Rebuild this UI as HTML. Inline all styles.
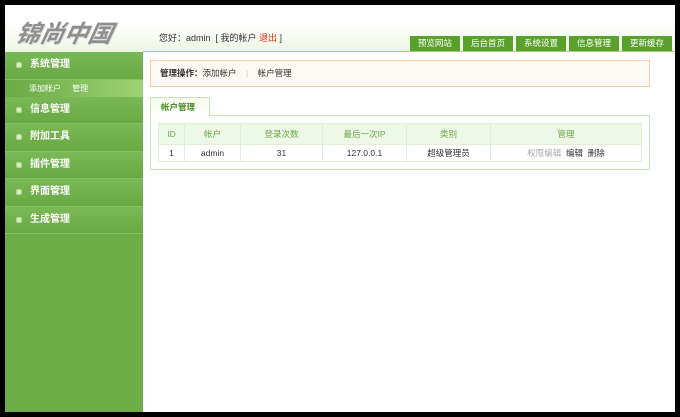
<!DOCTYPE html><html><head><meta charset="utf-8"><style>
*{margin:0;padding:0;box-sizing:border-box}
body{width:680px;height:417px;background:#000;font-family:"Liberation Sans","Noto Sans CJK SC",sans-serif;font-size:9px;color:#333;position:relative;overflow:hidden}
#wrap{position:absolute;left:5px;top:5px;width:670px;height:407px;background:#fff}
#hd{position:absolute;left:0;top:0;width:670px;height:47px;background:linear-gradient(#fff 40%,#eef5e4)}
#logo{position:absolute;left:12px;top:9px;font-size:24px;font-weight:bold;font-style:italic;color:#8f8f8f;font-family:"Noto Sans CJK SC",sans-serif;letter-spacing:0px;text-shadow:1px 1px 0 #ddd;transform:skewX(-12deg)}
#hi{position:absolute;left:154px;top:26px;font-size:9px;color:#333}
#hi span{color:#e03010}
#nav{position:absolute;right:3px;top:31px;display:flex;gap:3px}
#nav div{background:#5aa12c;color:#fff;font-size:8.5px;height:15px;line-height:15px;padding:0 8px}
#hline{position:absolute;left:138px;top:46px;width:532px;height:1px;background:#9fcf7f}
#sb{position:absolute;left:0;top:47px;width:138px;height:360px;background:#6cad47}
.mi{height:27.5px;line-height:26px;color:#fff;font-weight:bold;font-size:10px;padding-left:25px;position:relative;background:linear-gradient(#79b956,#68a944);border-bottom:1px solid #86c064}
.mi:before{content:"";position:absolute;left:11px;top:10px;width:6px;height:6px;background:radial-gradient(circle,#d9f0c8 40%,#9dd27c 70%);border-radius:1px}
.sub{height:17px;line-height:17px;color:#fff;font-size:8px;padding-left:24px;background:linear-gradient(90deg,#6cad47 10%,#9ed474)}
#bc{position:absolute;left:145px;top:55px;width:500px;height:27px;border:1px solid #f8d0a8;background:#fcf9f4;line-height:25px;padding-left:9px;font-size:8.5px}
#tab{position:absolute;left:145px;top:92px;width:60px;height:19px;border:1px solid #c8e6b4;border-bottom:none;background:linear-gradient(#f4fbee,#fff);color:#4a8a20;font-weight:bold;font-size:8.5px;line-height:18px;padding-left:10px;z-index:2}
#box{position:absolute;left:145px;top:110px;width:500px;height:55px;border:1px solid #c8e6b4}
table{position:absolute;left:7px;top:7px;width:484px;border-collapse:collapse;font-size:8.5px;text-align:center}
td{border:1px solid #e0eed5;height:17px}
tr.h td{background:#eef8e6;color:#6aa84a;height:21px}
</style></head><body><div id="wrap">
<div id="hd"><div id="logo">锦尚中国</div>
<div id="hi">您好：admin &nbsp;[ 我的帐户 <span>退出</span> ]</div>
<div id="nav"><div>预览网站</div><div>后台首页</div><div>系统设置</div><div>信息管理</div><div>更新缓存</div></div></div>
<div id="hline"></div>
<div id="sb">
<div class="mi">系统管理</div>
<div class="sub">添加帐户 &nbsp;&nbsp;&nbsp;&nbsp;管理</div>
<div class="mi">信息管理</div>
<div class="mi">附加工具</div>
<div class="mi">插件管理</div>
<div class="mi">界面管理</div>
<div class="mi">生成管理</div>
</div>
<div id="bc"><b>管理操作：</b>添加帐户 &nbsp;&nbsp;&nbsp;<span style="color:#ccc">|</span>&nbsp;&nbsp;&nbsp; 帐户管理</div>
<div id="tab">帐户管理</div>
<div id="box"><table>
<tr class="h"><td style="width:26px">ID</td><td style="width:56px">帐户</td><td style="width:82px">登录次数</td><td style="width:84px">最后一次IP</td><td style="width:84px">类别</td><td>管理</td></tr>
<tr><td>1</td><td>admin</td><td>31</td><td>127.0.0.1</td><td>超级管理员</td><td><span style="color:#aaa">权限编辑</span> &nbsp;编辑 &nbsp;删除</td></tr>
</table></div>
</div></body></html>
